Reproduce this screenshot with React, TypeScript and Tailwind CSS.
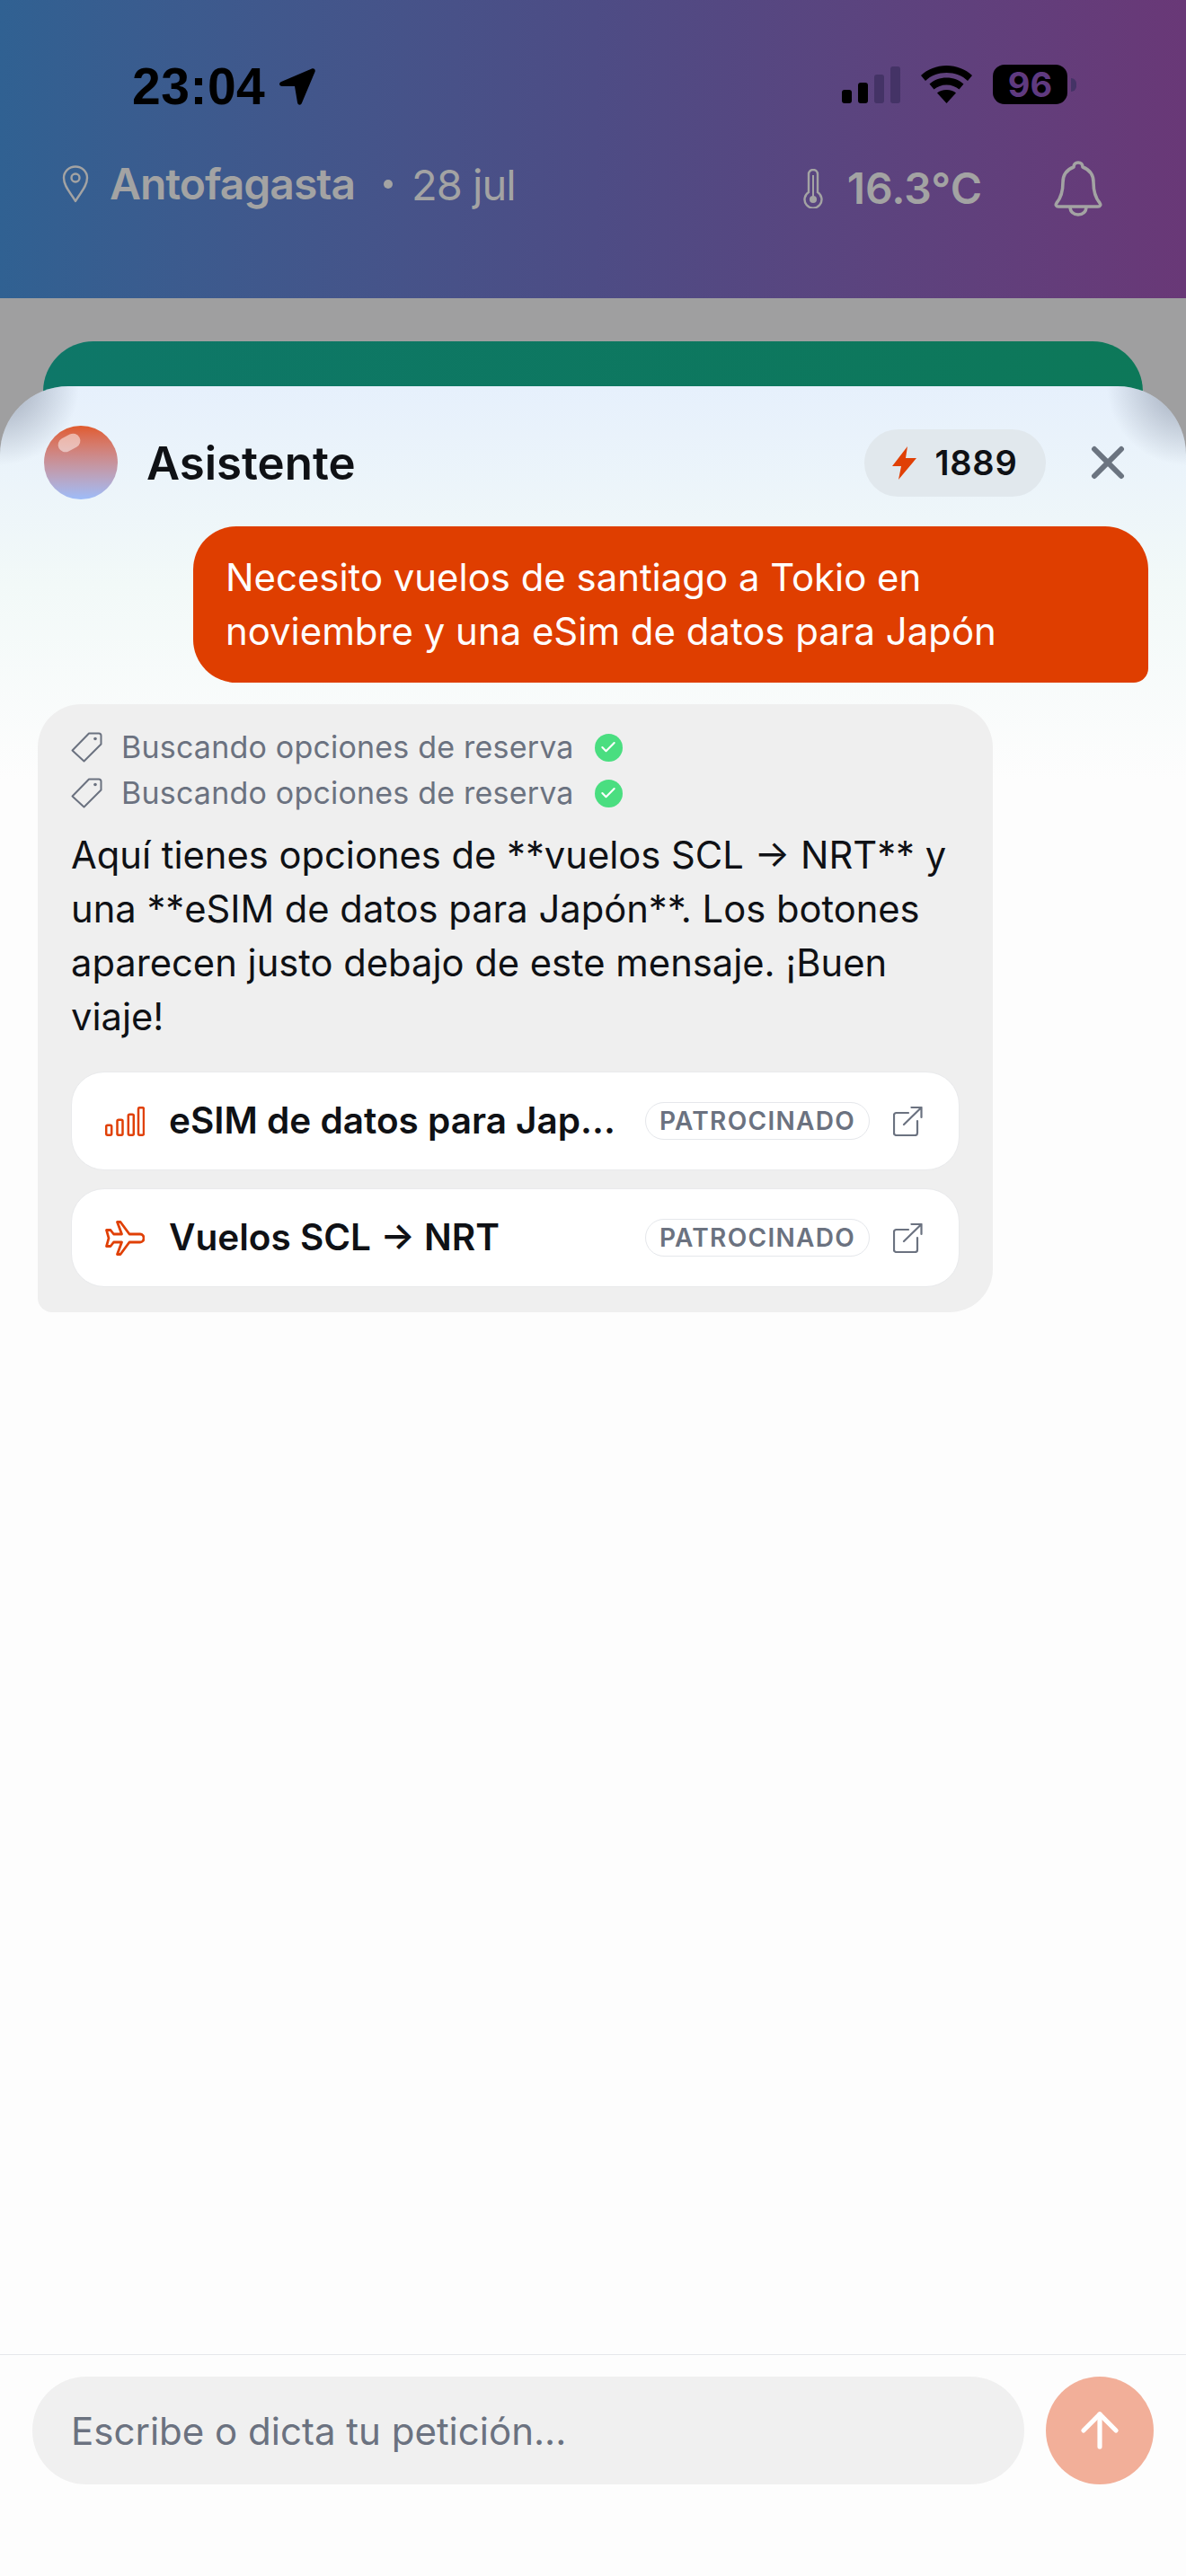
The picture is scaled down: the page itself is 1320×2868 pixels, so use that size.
import React from "react";
import { X, ArrowUp, Check } from "lucide-react";

const font = "font-['Inter','Liberation_Sans',sans-serif]";

function Pin() {
  return (
    <svg width="30" height="42" viewBox="0 0 30 42" fill="none" stroke="#a3a3a3" strokeWidth="2.400">
      <path d="M15 40C10 31 2 24 2 14a13 12.500 0 0 1 26 0c0 10-8 17-13 26Z" strokeLinejoin="round" />
      <circle cx="15" cy="14" r="4.500" />
    </svg>
  );
}

function Therm() {
  return (
    <svg width="22" height="44" viewBox="0 0 22 44" fill="none" stroke="#a3a3a3" strokeWidth="2.400">
      <path d="M6 26V6a5 5 0 0 1 10 0v20a9.500 9.500 0 1 1-10 0Z" />
      <circle cx="11" cy="34" r="4" fill="#a3a3a3" stroke="none" />
      <path d="M11 7v25" strokeWidth="2" />
    </svg>
  );
}

function BellIcon() {
  return (
    <svg width="54" height="62" viewBox="0 0 54 62" fill="none" stroke="#a3a3a3" strokeWidth="3.600" strokeLinejoin="round">
      <path d="M27 2c3 0 5 2 5 5 8 3 12 9 12 17 0 11 2 17 7 23 1.500 2 .5 4-2 4H5c-2.500 0-3.500-2-2-4 5-6 7-12 7-23 0-8 4-14 12-17 0-3 2-5 5-5Z" />
      <path d="M18 51c0 6 4 9 9 9s9-3 9-9" />
    </svg>
  );
}

function Signal() {
  return (
    <div className="flex items-end gap-[7px] h-[41px]">
      <div className="w-[11px] h-[15px] rounded-[3px] bg-black" />
      <div className="w-[11px] h-[23px] rounded-[3px] bg-black" />
      <div className="w-[11px] h-[32px] rounded-[3px] bg-[#443366]" />
      <div className="w-[11px] h-[41px] rounded-[3px] bg-[#443366]" />
    </div>
  );
}

function Wifi() {
  return (
    <svg width="57" height="42" viewBox="0 0 57 42">
      <path d="M28.500 0C17.500 0 7.500 4 0 11l5 6C11 11 19.500 8 28.500 8s17.500 3 23.500 9l5-6C49.500 4 39.500 0 28.500 0Z" fill="#000" />
      <path d="M28.500 13.500c-7.500 0-14 2.500-19 7l5 6c3.500-3 8.500-5 14-5s10.500 2 14 5l5-6c-5-4.500-11.500-7-19-7Z" fill="#000" />
      <path d="M28.500 27c-4.500 0-8 1.300-10.500 3.500L28.500 42 39 30.500C36.500 28.300 33 27 28.500 27Z" fill="#000" />
    </svg>
  );
}

function SignalOutline() {
  return (
    <svg width="44" height="33" viewBox="0 0 44 33" fill="none" stroke="#e04006" strokeWidth="2.500">
      <rect x="1.200" y="20.700" width="6" height="11" rx="1.500" />
      <rect x="13.500" y="14.700" width="6" height="17" rx="1.500" />
      <rect x="25.800" y="8.700" width="6" height="23" rx="1.500" />
      <rect x="37" y="1.200" width="6" height="30.500" rx="1.500" />
    </svg>
  );
}

function PlaneOutline() {
  return (
    <svg width="44" height="39" viewBox="0 0 44 39" fill="none" stroke="#e04006" strokeWidth="2.800" strokeLinejoin="round">
      <path d="M13.500 1.500h3.500L27 15h12c2.500 0 4 2 4 4.500S41.500 24 39 24H27L17 37.500h-3.500L18.500 24H9.500L6 28.500H1.500l2.500-9-2.500-9H6L9.500 15h9L13.500 1.500Z" />
    </svg>
  );
}

function TagIcon() {
  return (
    <svg width="35" height="34" viewBox="0 0 35 34" fill="none" stroke="#6b7280" strokeWidth="2" strokeLinejoin="round">
      <path d="M20 1.500h11a2.500 2.500 0 0 1 2.500 2.500v9.500L14.500 32.500 1.500 20.500Z" />
      <circle cx="27" cy="7.500" r="1.800" fill="#6b7280" stroke="none" />
    </svg>
  );
}

function LinkIcon() {
  return (
    <svg width="33" height="33" viewBox="0 0 33 33" fill="none" stroke="#6b7280" strokeWidth="2.200" strokeLinecap="round" strokeLinejoin="round" className="ml-[26px] shrink-0">
      <path d="M17 7H3.500A2.500 2.500 0 0 0 1 9.500v20A2.500 2.500 0 0 0 3.500 32h21a2.500 2.500 0 0 0 2.500-2.500V16" />
      <path d="M12 20 31.500 1M20.500 1h11v11" />
    </svg>
  );
}

function SearchRow() {
  return (
    <div className="flex items-center h-[28px] leading-none">
      <span className="w-[35px] mr-[21px] shrink-0 flex"><TagIcon /></span>
      <span className="text-[#6b7280] text-[34px] tracking-[0.2px] leading-none">Buscando opciones de reserva</span>
      <span className="ml-[23px] w-[31px] h-[31px] rounded-full bg-[#4ade80] flex items-center justify-center">
        <Check size={20} strokeWidth={2.500} className="text-white" />
      </span>
    </div>
  );
}

function Option({ icon, label }: { icon: React.ReactNode; label: string }) {
  return (
    <div className="h-[110px] rounded-[37px] bg-white border border-[#e9eaec] flex items-center pl-[37px] pr-[40px]">
      <div className="w-[44px] flex justify-center shrink-0">{icon}</div>
      <div className="ml-[27px] w-[503px] whitespace-nowrap text-[40.500px] font-semibold text-[#0f1115] leading-none py-2">{label}</div>
      <div className="ml-[27px] h-[42px] w-[250px] shrink-0 rounded-full border border-[#e5e7eb] flex items-center justify-center text-[28px] font-semibold tracking-[1.300px] text-[#6b7280]">
        PATROCINADO
      </div>
      <LinkIcon />
    </div>
  );
}

export default function App() {
  return (
    <div className={`relative h-[2868px] w-[1320px] overflow-hidden bg-[#9f9fa0] ${font}`}>
      <header className="h-[332px] bg-gradient-to-r from-[#306192] via-[#4d4c85] to-[#693877] px-[67px]">
        <div className="flex justify-between pt-[72px] h-[165px]">
          <div className="flex items-center h-[48px] pl-[80px]">
            <span className="text-[57px] font-bold text-black leading-none tracking-[0.5px] font-['Liberation_Sans',sans-serif]">23:04</span>
            <svg width="41" height="41" viewBox="0 0 41 41" className="ml-[15px]">
              <path d="M37 .5 3 15c-3 1.300-2.500 5 1 5h14l3 18c.5 3.500 4 3.500 5 .5L40.500 4c1-2.500-1-4.500-3.500-3.500Z" fill="#000" />
            </svg>
          </div>
          <div className="flex items-center gap-[23px] h-[44px] pr-[55px]">
            <Signal />
            <Wifi />
            <div className="flex items-center">
              <div className="w-[83px] h-[44px] rounded-[13px] bg-black flex items-center justify-center text-[38px] font-bold text-[#5f3a80] leading-none">96</div>
              <div className="w-[6px] h-[15px] rounded-r-full bg-[#443366] ml-[4px]" />
            </div>
          </div>
        </div>
        <div className="flex items-center justify-between h-[80px]">
          <div className="flex items-center pl-[2px]">
            <Pin />
            <span className="ml-[23px] text-[48px] tracking-[-1px] font-semibold text-[#a3a3a3] leading-none">Antofagasta</span>
            <span className="ml-[32px] w-[10px] h-[10px] rounded-full bg-[#a3a3a3]" />
            <span className="ml-[21px] text-[47px] tracking-[-1px] text-[#a3a3a3] leading-none">28 jul</span>
          </div>
          <div className="flex items-center pr-[26px] pt-[10px]">
            <Therm />
            <span className="ml-[27px] text-[48px] font-semibold text-[#a3a3a3] leading-none">16.3°C</span>
            <span className="ml-[80px] flex"><BellIcon /></span>
          </div>
        </div>
      </header>

      <div className="mx-[48px] mt-[48px] h-[200px] rounded-t-[56px] bg-gradient-to-r from-[#0e7768] to-[#0d7859]" />

      <section className="absolute left-0 right-0 top-[430px] bottom-0 overflow-hidden rounded-t-[76px] bg-gradient-to-b from-[#e6f0fc] via-[#f2f9f8] via-[9%] to-[#fdfdfd] to-[18%] flex flex-col">
        <div className="absolute left-0 top-0 w-[100px] h-[100px] bg-[radial-gradient(circle_at_top_left,rgba(110,120,140,0.4)_30px,transparent_88px)]" />
        <div className="absolute right-0 top-0 w-[100px] h-[100px] bg-[radial-gradient(circle_at_top_right,rgba(110,120,140,0.4)_30px,transparent_88px)]" />
        <div className="relative flex items-center h-[170px] shrink-0 pl-[49px] pr-[57px] -mb-[14px]">
          <div className="relative w-[82px] h-[82px] rounded-full bg-gradient-to-b from-[#e05a2b] to-[#9dbcf9]">
            <div className="absolute left-[15px] top-[11px] w-[26px] h-[16px] rounded-full bg-white/50 -rotate-[28deg]" />
          </div>
          <div className="ml-[32px] text-[51px] font-semibold text-[#0f1115] leading-none">Asistente</div>
          <div className="ml-auto flex items-center h-[75px] w-[202px] rounded-full bg-[#e1e8ed] justify-center">
            <svg width="27" height="37" viewBox="0 0 27 37"><path d="M17 0 0 22h10L7 37l20-24H15Z" fill="#e04006" /></svg>
            <span className="ml-[20px] text-[38px] font-semibold tracking-[0.8px] text-[#0f1115] leading-none">1889</span>
          </div>
          <X size={60} strokeWidth={2.400} className="ml-[39px] text-[#6b7480]" />
        </div>

        <div className="relative flex-1 px-[41px] flex flex-col">
          <div className="self-end mr-[1px] w-[1063px] h-[174px] rounded-[48px] rounded-br-[16px] bg-[#df3e00] text-white text-[41.900px] leading-[60px] pl-[36px] pt-[27px] font-normal">
            Necesito vuelos de santiago a Tokio en
            <br />
            noviembre y una eSim de datos para Japón
          </div>

          <div className="mt-[24px] ml-[1px] w-[1063px] h-[677px] rounded-[48px] rounded-bl-[16px] bg-[#efefef] px-[37px] pt-[34px]">
            <SearchRow />
            <div className="h-[23px]" />
            <SearchRow />
            <div className="mt-[25px] text-[41.700px] leading-[60px] text-[#0f1115]">
              Aquí tienes opciones de **vuelos SCL → NRT** y
              <br />
              una **eSIM de datos para Japón**. Los botones
              <br />
              aparecen justo debajo de este mensaje. ¡Buen
              <br />
              viaje!
            </div>
            <div className="mt-[31px] flex flex-col gap-[20px]">
              <Option icon={<SignalOutline />} label="eSIM de datos para Jap..." />
              <Option icon={<PlaneOutline />} label="Vuelos SCL → NRT" />
            </div>
          </div>
        </div>

        <div className="relative h-[247px] shrink-0 border-t border-[#e5e7eb] pt-[24px] px-[36px] flex gap-[24px] items-start">
          <div className="w-[1104px] h-[120px] rounded-full bg-[#f0f0f0] flex items-center pl-[43px] text-[42px] text-[#6b7280]">
            Escribe o dicta tu petición...
          </div>
          <div className="w-[120px] h-[120px] rounded-full bg-[#f2af99] flex items-center justify-center">
            <ArrowUp size={62} strokeWidth={2} className="text-white" />
          </div>
        </div>
      </section>
    </div>
  );
}
